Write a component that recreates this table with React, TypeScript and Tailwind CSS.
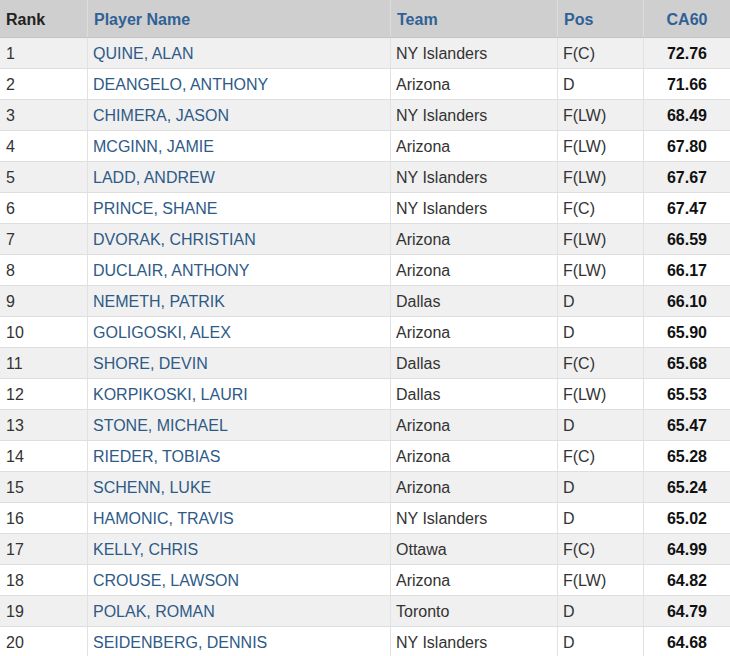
import React from "react";

const rows: [string, string, string, string][] = [
  ["QUINE, ALAN", "NY Islanders", "F(C)", "72.76"],
  ["DEANGELO, ANTHONY", "Arizona", "D", "71.66"],
  ["CHIMERA, JASON", "NY Islanders", "F(LW)", "68.49"],
  ["MCGINN, JAMIE", "Arizona", "F(LW)", "67.80"],
  ["LADD, ANDREW", "NY Islanders", "F(LW)", "67.67"],
  ["PRINCE, SHANE", "NY Islanders", "F(C)", "67.47"],
  ["DVORAK, CHRISTIAN", "Arizona", "F(LW)", "66.59"],
  ["DUCLAIR, ANTHONY", "Arizona", "F(LW)", "66.17"],
  ["NEMETH, PATRIK", "Dallas", "D", "66.10"],
  ["GOLIGOSKI, ALEX", "Arizona", "D", "65.90"],
  ["SHORE, DEVIN", "Dallas", "F(C)", "65.68"],
  ["KORPIKOSKI, LAURI", "Dallas", "F(LW)", "65.53"],
  ["STONE, MICHAEL", "Arizona", "D", "65.47"],
  ["RIEDER, TOBIAS", "Arizona", "F(C)", "65.28"],
  ["SCHENN, LUKE", "Arizona", "D", "65.24"],
  ["HAMONIC, TRAVIS", "NY Islanders", "D", "65.02"],
  ["KELLY, CHRIS", "Ottawa", "F(C)", "64.99"],
  ["CROUSE, LAWSON", "Arizona", "F(LW)", "64.82"],
  ["POLAK, ROMAN", "Toronto", "D", "64.79"],
  ["SEIDENBERG, DENNIS", "NY Islanders", "D", "64.68"],
];

const grid = "grid grid-cols-[87px_303px_167px_86px_87px]";

export default function App() {
  return (
    <div
      className="w-[730px] h-[656px] overflow-hidden bg-white text-[16px]"
      style={{ fontFamily: '"Liberation Sans", Arial, sans-serif' }}
    >
      <div className={`${grid} h-[38px] bg-[#cfcfcf] font-bold items-center border-b border-[#c4c4c4]`}>
        <div className="pl-[6px] pt-[2px] text-[#222] h-full flex items-center">Rank</div>
        <div className="pl-[6px] pt-[2px] text-[#2f6196] h-full flex items-center border-l border-[#dcdcdc]">Player Name</div>
        <div className="pl-[6px] pt-[2px] text-[#2f6196] h-full flex items-center border-l border-[#dcdcdc]">Team</div>
        <div className="pl-[6px] pt-[2px] text-[#2f6196] h-full flex items-center border-l border-[#dcdcdc]">Pos</div>
        <div className="pt-[2px] text-[#2f6196] h-full flex items-center justify-center border-l border-[#dcdcdc]">CA60</div>
      </div>
      {rows.map((r, i) => (
        <div
          key={i}
          className={`${grid} h-[31px] border-b border-[#dedede] ${i % 2 === 0 ? "bg-[#f0f0f0]" : "bg-white"}`}
        >
          <div className="pl-[6px] pt-[2px] text-[#333] flex items-center">{i + 1}</div>
          <div className="pl-[5px] pt-[2px] text-[#2e5a87] flex items-center border-l border-[#e2e2e2]">{r[0]}</div>
          <div className="pl-[5px] pt-[2px] text-[#333] flex items-center border-l border-[#e2e2e2]">{r[1]}</div>
          <div className="pl-[5px] pt-[2px] text-[#333] flex items-center border-l border-[#e2e2e2]">{r[2]}</div>
          <div className="pt-[2px] font-bold text-[#111] flex items-center justify-center border-l border-[#e2e2e2]">{r[3]}</div>
        </div>
      ))}
    </div>
  );
}
